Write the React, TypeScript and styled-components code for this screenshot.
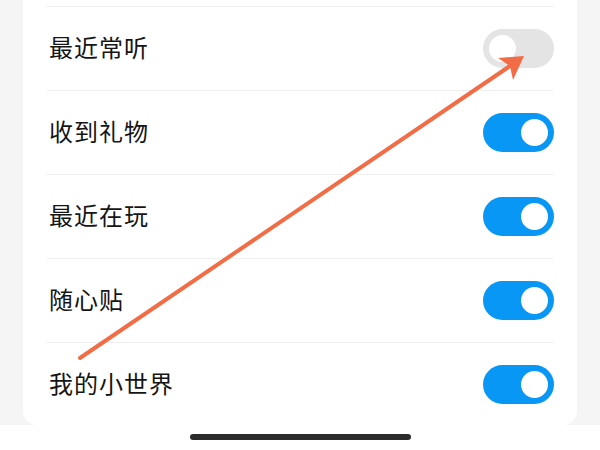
import styled, { createGlobalStyle } from "styled-components"

const GlobalStyle = createGlobalStyle`
  html, body {
    margin: 0;
    padding: 0;
    background: #f5f5f5;
    font-family: "Noto Sans CJK SC", "Noto Sans", sans-serif;
  }
`

const items = [
  { label: '最近常听', on: false },
  { label: '收到礼物', on: true },
  { label: '最近在玩', on: true },
  { label: '随心贴', on: true },
  { label: '我的小世界', on: true },
]

const App = () => {
  return (
    <Page>
      <GlobalStyle />
      <Card>
        {items.map((item) => (
          <Row key={item.label}>
            <Label>{item.label}</Label>
            <Toggle on={item.on}>
              <Knob />
            </Toggle>
          </Row>
        ))}
      </Card>
      <BottomBar>
        <HomeIndicator />
      </BottomBar>
      <Arrow width="600" height="450" viewBox="0 0 600 450">
        <line x1="80" y1="358" x2="510" y2="66" stroke="#f26c45" strokeWidth="4" strokeLinecap="round" />
        <polygon points="524,56 498,58 510,66 513,80" fill="#f26c45" />
      </Arrow>
    </Page>
  )
}

const Page = styled.div`
  position: relative;
  width: 600px;
  height: 450px;
  overflow: hidden;
  background: #f5f5f5;
  display: flex;
  flex-direction: column;
`

const Card = styled.div`
  margin: 0 23px;
  padding: 6px 24px 0;
  height: 425px;
  flex-shrink: 0;
  box-sizing: border-box;
  background: #ffffff;
  border-radius: 0 0 14px 14px;
  display: flex;
  flex-direction: column;
  overflow: hidden;
`

const Row = styled.div`
  height: 84px;
  flex-shrink: 0;
  border-top: 1px solid #efefef;
  display: flex;
  align-items: center;
  justify-content: space-between;
  box-sizing: border-box;
`

const Label = styled.span`
  font-size: 24px;
  color: #151515;
  letter-spacing: 1px;
  padding-left: 2px;
  margin-bottom: 4px;
`

const Toggle = styled.div<{ on: boolean }>`
  width: 71px;
  height: 39px;
  margin-right: -1px;
  border-radius: 20px;
  background: ${(p) => (p.on ? '#0997f5' : '#e4e4e4')};
  display: flex;
  align-items: center;
  justify-content: ${(p) => (p.on ? 'flex-end' : 'flex-start')};
  padding: 0 6px;
  box-sizing: border-box;
`

const Knob = styled.div`
  width: 27px;
  height: 27px;
  border-radius: 50%;
  background: #ffffff;
`

const BottomBar = styled.div`
  flex: 1;
  background: #ffffff;
  display: flex;
  justify-content: center;
  padding-top: 9px;
  box-sizing: border-box;
`

const HomeIndicator = styled.div`
  width: 221px;
  height: 6px;
  border-radius: 3px;
  background: #2b2b2b;
`

const Arrow = styled.svg`
  position: absolute;
  left: 0;
  top: 0;
  pointer-events: none;
`

export default App
